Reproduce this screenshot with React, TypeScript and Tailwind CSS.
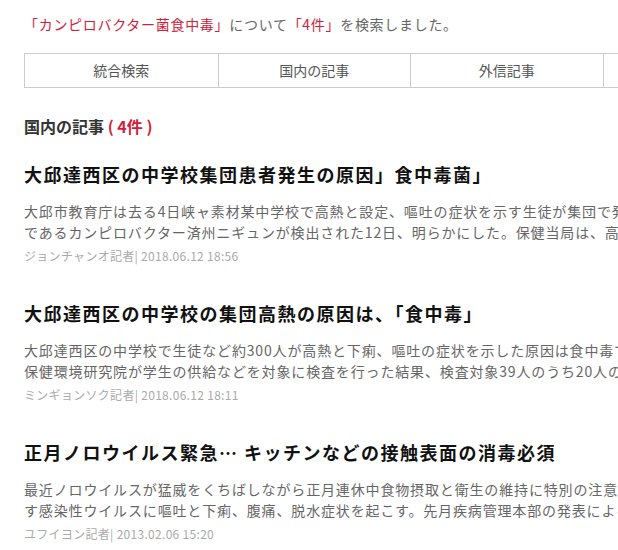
import React from 'react';

const RED = 'text-[#d0213a]';

interface Article {
  title: string;
  body: string[];
  meta: string;
}

const articles: Article[] = [
  {
    title: '大邱達西区の中学校集団患者発生の原因」食中毒菌」',
    body: [
      '大邱市教育庁は去る4日峡ャ素材某中学校で高熱と設定、嘔吐の症状を示す生徒が集団で発生したと明らかにした。',
      'であるカンピロバクター済州ニギュンが検出された12日、明らかにした。保健当局は、高熱などの症状を見せた',
    ],
    meta: 'ジョンチャンオ記者| 2018.06.12 18:56',
  },
  {
    title: '大邱達西区の中学校の集団高熱の原因は、「食中毒」',
    body: [
      '大邱達西区の中学校で生徒など約300人が高熱と下痢、嘔吐の症状を示した原因は食中毒であることが分かった。',
      '保健環境研究院が学生の供給などを対象に検査を行った結果、検査対象39人のうち20人のサンプルから検出',
    ],
    meta: 'ミンギョンソク記者| 2018.06.12 18:11',
  },
  {
    title: '正月ノロウイルス緊急… キッチンなどの接触表面の消毒必須',
    body: [
      '最近ノロウイルスが猛威をくちばしながら正月連休中食物摂取と衛生の維持に特別の注意が必要である。',
      'す感染性ウイルスに嘔吐と下痢、腹痛、脱水症状を起こす。先月疾病管理本部の発表によると、患者数が',
    ],
    meta: 'ユフイヨン記者| 2013.02.06 15:20',
  },
];

const tabs = ['統合検索', '国内の記事', '外信記事', 'フォト'];

const ArticleItem: React.FC<{ a: Article }> = ({ a }) => (
  <div className="mb-[35px]">
    <h2 className="text-[18px] leading-[26px] font-bold text-[#111] tracking-[1.5px] whitespace-nowrap">{a.title}</h2>
    <div className="mt-[14px] text-[14px] leading-[21px] text-[#666] tracking-[0.85px]">
      {a.body.map((line, i) => (
        <p key={i} className="whitespace-nowrap">{line}</p>
      ))}
    </div>
    <p className="mt-[4px] text-[12px] leading-[18px] text-[#aaa] tracking-[0.3px] whitespace-nowrap">{a.meta}</p>
  </div>
);

export default function App() {
  return (
    <div
      className="w-[618px] h-[550px] overflow-hidden bg-white"
      style={{ fontFamily: '"Noto Sans CJK JP", "Noto Sans", sans-serif' }}
    >
      <div className="w-[820px] pl-6 pt-[14px]">
        <p className="text-[14px] leading-[20px] text-[#666] tracking-[0.7px] whitespace-nowrap">
          <span className={RED}>「カンピロバクター菌食中毒」</span>について
          <span className={RED}>「4件」</span>を検索しました。
        </p>

        <div className="mt-[19px] grid grid-cols-4 w-[772px] border border-[#ccc]">
          {tabs.map((t, i) => (
            <div
              key={t}
              className={`h-[33px] flex items-center justify-center text-[14px] text-[#555] ${i > 0 ? 'border-l border-[#ccc]' : ''}`}
            >
              {t}
            </div>
          ))}
        </div>

        <h3 className="mt-[27px] text-[16px] leading-[22px] font-bold text-[#333]">
          国内の記事<span className={RED}> ( 4件 )</span>
        </h3>

        <div className="mt-[24px]">
          {articles.map((a, i) => (
            <ArticleItem key={i} a={a} />
          ))}
        </div>
      </div>
    </div>
  );
}
